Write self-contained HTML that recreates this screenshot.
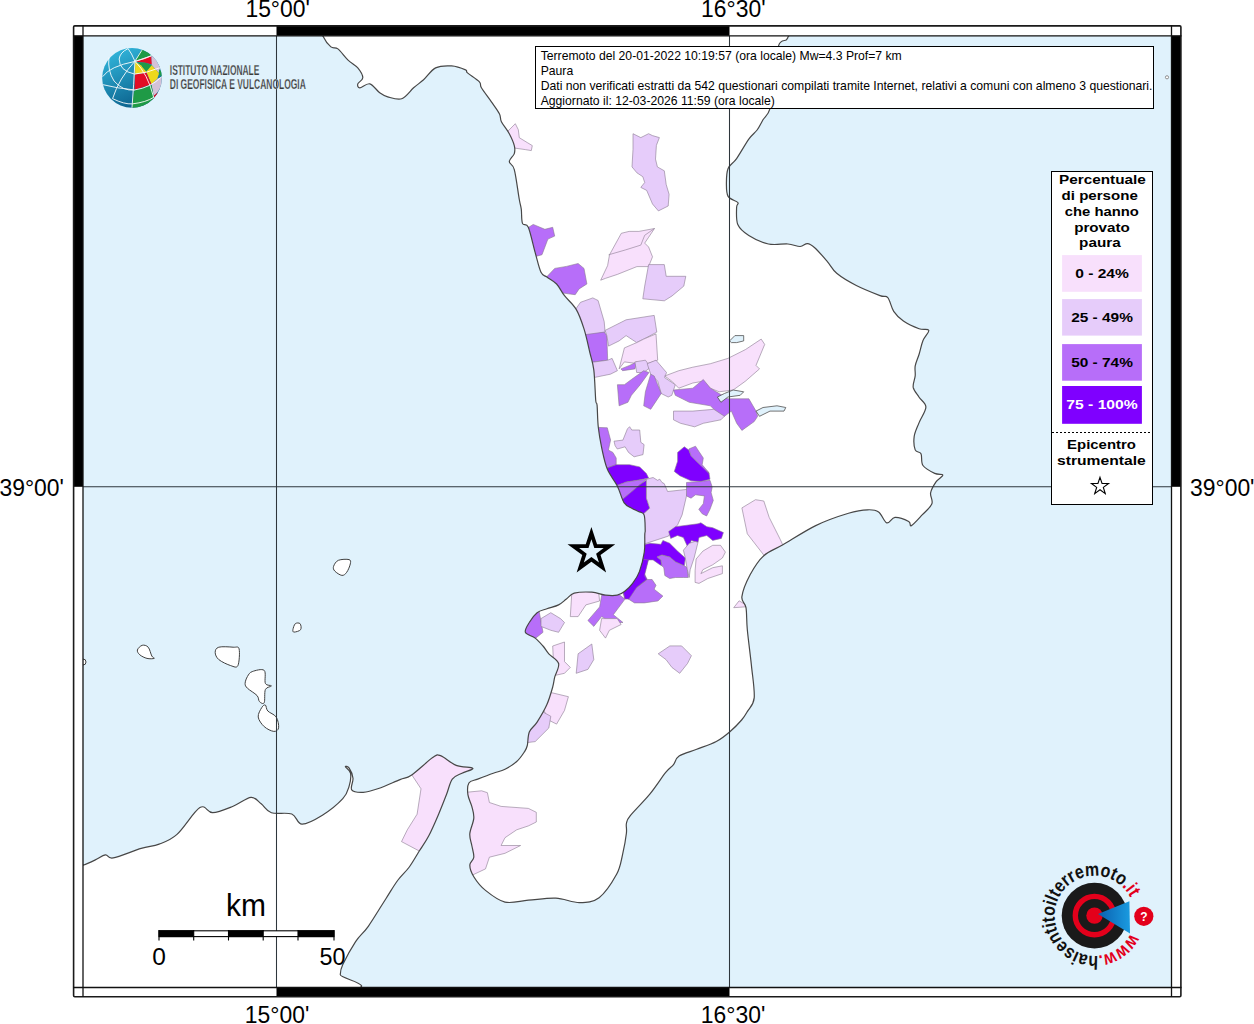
<!DOCTYPE html><html><head><meta charset="utf-8"><style>html,body{margin:0;padding:0;background:#fff;width:1254px;height:1024px;overflow:hidden}svg{display:block}text{font-family:"Liberation Sans",sans-serif}</style></head><body>
<svg width="1254" height="1024" viewBox="0 0 1254 1024">
<defs><clipPath id="mc"><rect x="83" y="36" width="1088" height="951"/></clipPath>
<linearGradient id="gb" x1="0.2" y1="0.1" x2="0.6" y2="1"><stop offset="0" stop-color="#2fb0d6"/><stop offset="1" stop-color="#0a5f8a"/></linearGradient>
<clipPath id="gc2"><circle cx="505" cy="517" r="407"/></clipPath>
<linearGradient id="tb" x1="0" y1="0" x2="1" y2="0"><stop offset="0" stop-color="#0a5fae"/><stop offset="1" stop-color="#1a9be0"/></linearGradient>
<path id="ring" d="M1130.6,933.2 A40,40 0 1,1 1130.8,898.7"/>
</defs>
<rect x="83" y="36" width="1088" height="951" fill="#E0F2FC"/>
<g clip-path="url(#mc)">
<path d="M322.9,30.0C245.2,31.0 321.6,33.2 322.9,36.0C324.2,38.8 328.4,44.8 330.9,46.9C333.4,49.0 335.1,46.7 337.9,48.9C340.7,51.1 344.5,56.7 347.8,59.9C351.1,63.1 355.3,64.9 357.8,67.9C360.3,70.9 362.8,75.2 362.8,77.8C362.8,80.4 358.3,82.1 357.8,83.8C357.3,85.5 357.8,87.8 359.8,87.8C361.8,87.8 366.5,83.0 369.8,83.8C373.1,84.6 376.7,90.6 379.7,92.8C382.7,95.0 384.0,95.8 387.7,96.8C391.4,97.8 397.4,100.3 401.7,98.8C406.0,97.3 410.0,91.0 413.6,87.8C417.2,84.6 419.9,83.1 423.6,79.8C427.3,76.5 431.0,70.2 435.6,67.9C440.2,65.6 446.5,65.6 451.5,65.9C456.5,66.2 462.8,68.7 465.5,69.9C468.2,71.1 465.2,70.9 467.5,72.9C469.8,74.9 477.1,79.3 479.4,81.8C481.7,84.3 479.4,84.5 481.4,87.8C483.4,91.1 488.4,97.5 491.4,101.8C494.4,106.1 497.7,110.4 499.4,113.7C501.1,117.0 499.8,118.4 501.4,121.7C503.0,125.0 507.2,129.7 509.3,133.7C511.4,137.7 513.5,142.3 514.3,145.6C515.1,148.9 515.1,150.9 514.3,153.6C513.5,156.3 509.3,158.9 509.3,161.6C509.3,164.3 512.6,163.3 514.3,169.6C516.0,175.9 518.1,192.9 519.3,199.5C520.5,206.1 520.8,205.4 521.3,209.4C521.8,213.4 521.3,220.4 522.5,223.4C523.7,226.4 526.2,222.4 528.3,227.3C530.4,232.2 533.1,245.2 535.2,252.7C537.3,260.2 539.0,268.2 541.0,272.3C543.0,276.4 544.3,275.2 546.9,277.1C549.5,279.1 553.7,280.9 556.6,284.0C559.5,287.1 561.2,291.5 564.5,295.7C567.8,299.9 573.0,303.9 576.2,309.4C579.5,314.9 581.7,321.8 584.0,328.9C586.3,336.0 588.2,345.5 589.8,352.3C591.4,359.1 592.8,361.9 593.8,369.9C594.8,377.8 595.2,394.1 595.7,400.0C596.2,405.9 596.7,400.8 597.1,405.4C597.5,409.9 597.5,420.2 598.3,427.3C599.1,434.4 600.2,440.9 601.7,447.9C603.2,454.9 604.7,462.8 607.3,469.1C609.9,475.4 614.5,480.3 617.3,485.9C620.1,491.5 621.6,498.9 624.0,502.6C626.4,506.3 629.4,506.7 631.8,508.2C634.2,509.7 636.5,510.4 638.5,511.5C640.5,512.6 643.0,511.8 644.1,514.9C645.2,518.0 645.1,526.7 645.2,530.0C645.3,533.3 644.9,530.8 644.8,534.5C644.6,538.2 645.2,545.9 644.3,552.1C643.4,558.3 641.3,566.4 639.4,571.6C637.5,576.8 635.0,580.1 632.6,583.4C630.2,586.7 627.4,589.2 624.8,591.2C622.2,593.2 620.4,594.5 617.2,595.2C614.0,595.9 609.7,595.7 605.5,595.2C601.3,594.7 597.0,592.5 591.8,592.2C586.6,591.9 578.4,592.1 574.2,593.2C570.0,594.4 569.0,597.2 566.4,599.1C563.8,601.0 561.9,603.3 558.6,604.9C555.4,606.5 550.5,607.5 546.9,608.8C543.3,610.1 540.0,610.4 537.1,612.7C534.2,615.0 531.2,619.2 529.3,622.5C527.3,625.8 524.4,629.7 525.4,632.3C526.4,634.9 532.3,635.8 535.2,638.1C538.1,640.4 540.7,643.4 543.0,646.0C545.3,648.6 546.2,650.9 548.8,653.8C551.4,656.7 557.6,659.6 558.6,663.5C559.6,667.4 555.7,673.3 554.7,677.2C553.7,681.1 554.0,682.5 552.7,687.0C551.4,691.5 549.5,698.6 546.9,704.5C544.3,710.4 540.0,717.5 537.1,722.1C534.2,726.7 530.9,728.0 529.3,731.9C527.7,735.8 528.1,742.2 527.3,745.5C526.5,748.8 526.3,749.0 524.5,751.7C522.7,754.4 520.0,758.6 516.7,761.5C513.5,764.4 508.9,767.3 505.0,769.3C501.1,771.2 497.9,771.6 493.3,773.2C488.8,774.8 481.8,777.5 477.7,779.1C473.6,780.7 470.5,780.4 468.9,783.0C467.3,785.6 467.4,790.8 467.9,794.7C468.4,798.6 470.8,802.5 471.8,806.4C472.8,810.3 474.1,813.5 473.8,818.1C473.5,822.7 470.1,829.2 469.8,833.8C469.5,838.4 471.1,841.6 471.8,845.5C472.5,849.4 474.1,854.0 473.8,857.2C473.5,860.5 469.8,861.8 469.8,865.0C469.8,868.2 471.2,872.5 473.8,876.7C476.4,880.9 480.3,886.2 485.5,890.4C490.7,894.6 497.9,900.5 505.0,902.1C512.1,903.7 519.9,900.9 528.4,900.2C536.9,899.6 547.3,897.8 555.8,898.2C564.3,898.6 572.3,902.7 579.5,902.6C586.7,902.5 592.9,902.4 599.1,897.7C605.3,893.0 612.7,881.4 616.6,874.3C620.5,867.1 620.9,861.6 622.5,854.8C624.1,848.0 625.8,838.5 626.4,833.3C627.0,828.1 625.8,826.4 626.4,823.5C627.0,820.6 626.4,820.6 630.3,815.7C634.2,810.8 643.9,801.4 649.8,794.2C655.7,787.0 661.6,777.6 665.5,772.7C669.4,767.8 671.0,767.7 673.3,764.9C675.6,762.1 675.2,758.7 679.1,756.1C683.0,753.5 690.5,751.7 696.7,749.3C702.9,746.9 710.8,744.4 716.3,741.5C721.8,738.6 725.7,735.3 729.9,731.7C734.1,728.1 738.7,723.4 741.6,720.0C744.5,716.6 745.2,715.3 747.3,711.6C749.4,707.9 753.5,705.6 754.2,697.9C754.9,690.1 752.5,676.5 751.4,665.1C750.2,653.7 748.2,639.1 747.3,629.5C746.4,619.9 746.9,613.2 746.0,607.7C745.1,602.2 741.2,602.2 741.9,596.7C742.6,591.2 746.5,581.6 750.1,574.8C753.8,568.0 758.3,560.7 763.8,555.7C769.3,550.7 774.2,549.8 782.9,544.8C791.5,539.8 804.8,530.9 815.7,525.6C826.6,520.4 839.8,515.9 848.5,513.3C857.2,510.7 862.7,510.0 867.7,509.8C872.7,509.6 875.4,509.8 878.6,512.0C881.8,514.2 884.1,522.0 886.8,522.9C889.5,523.8 891.4,517.6 895.0,517.4C898.6,517.2 906.0,520.1 908.7,521.5C911.4,522.9 909.1,526.7 911.4,525.6C913.7,524.5 919.0,518.3 922.4,514.7C925.8,511.1 930.5,507.5 931.9,503.8C933.3,500.1 929.9,496.5 930.6,492.8C931.3,489.1 934.0,484.9 936.0,481.9C938.0,478.9 943.1,476.4 942.9,475.0C942.7,473.6 938.0,475.0 934.7,473.4C931.4,471.8 925.3,468.8 923.0,465.5C920.7,462.2 922.3,456.4 921.0,453.8C919.7,451.2 916.3,452.8 915.2,449.9C914.1,447.0 913.6,440.9 914.2,436.3C914.9,431.8 917.2,427.5 919.1,422.6C921.0,417.7 925.9,411.2 925.9,407.0C925.9,402.8 921.2,400.5 919.1,397.2C917.0,393.9 913.9,391.0 913.2,387.4C912.6,383.8 914.9,379.3 915.2,375.7C915.5,372.1 914.6,369.5 915.2,365.9C915.9,362.3 917.8,358.4 919.1,354.2C920.4,350.0 921.4,344.5 923.0,340.5C924.6,336.5 929.4,332.3 928.8,330.4C928.1,328.4 923.3,330.4 919.1,328.8C914.9,327.2 907.6,323.9 903.4,321.0C899.2,318.1 896.3,315.2 893.7,311.3C891.1,307.4 890.1,300.2 887.8,297.6C885.5,295.0 885.2,297.6 880.0,295.6C874.8,293.6 863.5,289.2 856.3,285.5C849.1,281.8 841.6,277.4 836.7,273.3C831.8,269.2 830.7,265.4 827.0,261.1C823.3,256.8 818.0,250.6 814.7,247.7C811.4,244.8 809.8,243.8 807.4,243.6C805.0,243.4 803.4,246.4 800.1,246.5C796.9,246.6 793.2,244.4 787.9,244.0C782.6,243.6 774.9,245.4 768.4,244.0C761.9,242.6 753.9,238.8 748.8,235.5C743.7,232.2 739.8,229.2 737.8,224.5C735.8,219.8 736.6,211.1 736.6,207.4C736.6,203.7 739.2,204.3 737.8,202.5C736.4,200.7 730.0,199.7 728.1,196.4C726.2,193.2 726.4,187.7 726.4,183.0C726.4,178.3 726.4,172.5 728.1,168.4C729.8,164.3 733.2,163.5 736.6,158.6C740.0,153.7 745.4,143.9 748.8,139.1C752.2,134.3 754.7,133.2 757.1,130.0C759.5,126.8 760.9,123.3 763.0,119.8C765.1,116.3 768.0,115.7 769.8,109.1C771.6,102.5 772.5,90.6 774.0,80.0C775.5,69.4 776.5,52.3 778.6,45.6C780.7,38.9 784.8,41.4 786.4,39.8C788.0,38.2 788.0,37.6 788.4,36.0C788.8,34.4 866.6,31.0 789.0,30.0C711.4,29.0 400.6,29.0 322.9,30.0Z" fill="#fff"/>
<path d="M78.0,866.0C79.0,845.2 80.9,866.0 83.8,865.0C86.7,864.0 91.7,861.6 95.3,859.9C98.9,858.2 102.5,855.1 105.5,854.8C108.5,854.5 107.2,859.0 113.2,857.9C119.2,856.8 133.5,850.7 141.2,848.4C148.8,846.1 153.1,846.4 159.1,844.1C165.1,841.8 170.2,840.5 177.0,834.4C183.8,828.3 194.0,811.2 199.9,807.6C205.8,804.0 207.2,812.9 212.7,812.7C218.2,812.5 226.7,808.8 233.1,806.3C239.5,803.8 246.3,797.8 251.0,797.4C255.7,797.0 257.8,801.2 261.2,803.8C264.6,806.3 266.3,811.0 271.4,812.7C276.5,814.4 286.7,812.1 291.8,814.0C296.9,815.9 296.9,824.0 302.0,824.2C307.1,824.4 315.6,819.5 322.4,815.3C329.2,811.0 338.3,803.6 342.8,798.7C347.3,793.8 347.9,790.1 349.2,785.9C350.5,781.6 351.1,776.4 350.5,773.2C349.9,770.0 345.6,767.6 345.4,766.8C345.2,765.9 347.9,766.2 349.2,768.1C350.5,770.0 352.6,774.7 353.0,778.3C353.4,781.9 350.0,787.5 351.7,789.8C353.4,792.1 358.7,792.5 363.2,792.3C367.7,792.1 372.4,790.6 378.5,788.5C384.6,786.4 394.5,781.8 400.0,779.6C405.5,777.4 405.9,778.9 411.3,775.2C416.8,771.5 427.8,760.9 432.7,757.6C437.6,754.3 436.6,754.3 440.5,755.6C444.4,756.9 450.8,763.3 456.2,765.4C461.6,767.5 471.8,767.0 472.8,768.3C473.8,769.6 465.4,771.4 462.0,773.2C458.6,775.0 454.9,775.5 452.3,779.1C449.7,782.7 448.7,788.9 446.4,794.7C444.1,800.6 441.5,807.4 438.6,814.2C435.7,821.0 432.1,829.5 428.8,835.7C425.6,841.9 422.4,846.1 419.1,851.3C415.9,856.5 412.8,862.2 409.3,867.0C405.8,871.8 401.9,874.8 398.0,880.0C394.1,885.2 391.1,890.5 386.2,898.2C381.2,905.9 373.4,919.1 368.3,926.3C363.2,933.5 359.9,935.2 355.6,941.6C351.4,948.0 345.4,959.0 342.8,964.5C340.2,970.0 340.3,970.5 340.3,974.8C340.3,979.0 386.5,987.5 342.8,990.0C299.1,992.5 122.1,1010.7 78.0,990.0C33.9,969.3 77.0,886.8 78.0,866.0Z" fill="#fff"/>
<path d="M333.6,566.3C334.2,564.5 335.8,561.4 338.4,560.3C341.0,559.2 347.1,559.0 349.1,559.6C351.1,560.2 350.7,561.8 350.3,563.9C349.9,566.0 348.1,570.4 346.7,572.3C345.3,574.2 343.9,575.6 341.9,575.4C339.9,575.2 336.2,572.6 334.8,571.1C333.4,569.6 333.0,568.1 333.6,566.3Z" fill="#fff" stroke="#404040" stroke-width="1" stroke-linejoin="round"/>
<path d="M292.9,629.7C293.1,628.3 294.1,624.7 295.3,623.7C296.5,622.7 299.2,622.7 300.1,623.7C301.0,624.7 301.6,628.3 300.6,629.7C299.6,631.1 295.4,632.1 294.1,632.1C292.8,632.1 292.7,631.1 292.9,629.7Z" fill="#fff" stroke="#404040" stroke-width="1" stroke-linejoin="round"/>
<path d="M137.4,650.0C137.8,648.4 140.4,645.8 142.2,645.3C144.0,644.8 146.6,645.4 148.2,647.2C149.8,649.0 150.8,654.1 151.8,656.0C152.8,657.9 155.0,658.0 154.2,658.4C153.4,658.8 149.4,659.0 147.0,658.4C144.6,657.8 141.4,656.2 139.8,654.8C138.2,653.4 137.0,651.6 137.4,650.0Z" fill="#fff" stroke="#404040" stroke-width="1" stroke-linejoin="round"/>
<path d="M215.2,652.4C215.2,650.3 215.8,648.1 218.8,647.2C221.8,646.3 229.7,646.9 233.1,647.2C236.5,647.5 238.3,645.8 239.1,648.9C239.9,652.0 239.3,662.8 237.9,665.6C236.5,668.4 233.9,666.6 230.7,665.6C227.5,664.6 221.4,661.8 218.8,659.6C216.2,657.4 215.2,654.5 215.2,652.4Z" fill="#fff" stroke="#404040" stroke-width="1" stroke-linejoin="round"/>
<path d="M247.5,676.4C248.7,674.4 249.4,672.6 252.2,671.6C255.0,670.6 262.0,668.4 264.2,670.4C266.4,672.4 264.2,680.9 265.4,683.5C266.6,686.1 271.4,684.9 271.4,685.9C271.4,686.9 266.6,686.7 265.4,689.5C264.2,692.3 265.2,700.7 264.2,702.7C263.2,704.7 260.6,702.7 259.4,701.5C258.2,700.3 259.0,697.7 257.0,695.5C255.0,693.3 249.5,690.3 247.5,688.3C245.5,686.3 245.1,685.5 245.1,683.5C245.1,681.5 246.3,678.4 247.5,676.4Z" fill="#fff" stroke="#404040" stroke-width="1" stroke-linejoin="round"/>
<path d="M261.8,707.5C263.0,705.5 264.4,704.5 265.4,705.1C266.4,705.7 266.0,709.0 267.8,711.0C269.6,713.0 274.4,714.2 276.2,717.0C278.0,719.8 279.0,725.4 278.6,727.8C278.2,730.2 276.2,731.6 273.8,731.4C271.4,731.2 266.8,729.0 264.2,726.6C261.6,724.2 258.6,720.2 258.2,717.0C257.8,713.8 260.6,709.5 261.8,707.5Z" fill="#fff" stroke="#404040" stroke-width="1" stroke-linejoin="round"/>
<circle cx="83" cy="662" r="3" fill="#fff" stroke="#404040" stroke-width="1"/>
<circle cx="1167" cy="77.3" r="1.6" fill="#fff" stroke="#777" stroke-width="0.8"/>
<clipPath id="landclip"><path d="M322.9,30.0C245.2,31.0 321.6,33.2 322.9,36.0C324.2,38.8 328.4,44.8 330.9,46.9C333.4,49.0 335.1,46.7 337.9,48.9C340.7,51.1 344.5,56.7 347.8,59.9C351.1,63.1 355.3,64.9 357.8,67.9C360.3,70.9 362.8,75.2 362.8,77.8C362.8,80.4 358.3,82.1 357.8,83.8C357.3,85.5 357.8,87.8 359.8,87.8C361.8,87.8 366.5,83.0 369.8,83.8C373.1,84.6 376.7,90.6 379.7,92.8C382.7,95.0 384.0,95.8 387.7,96.8C391.4,97.8 397.4,100.3 401.7,98.8C406.0,97.3 410.0,91.0 413.6,87.8C417.2,84.6 419.9,83.1 423.6,79.8C427.3,76.5 431.0,70.2 435.6,67.9C440.2,65.6 446.5,65.6 451.5,65.9C456.5,66.2 462.8,68.7 465.5,69.9C468.2,71.1 465.2,70.9 467.5,72.9C469.8,74.9 477.1,79.3 479.4,81.8C481.7,84.3 479.4,84.5 481.4,87.8C483.4,91.1 488.4,97.5 491.4,101.8C494.4,106.1 497.7,110.4 499.4,113.7C501.1,117.0 499.8,118.4 501.4,121.7C503.0,125.0 507.2,129.7 509.3,133.7C511.4,137.7 513.5,142.3 514.3,145.6C515.1,148.9 515.1,150.9 514.3,153.6C513.5,156.3 509.3,158.9 509.3,161.6C509.3,164.3 512.6,163.3 514.3,169.6C516.0,175.9 518.1,192.9 519.3,199.5C520.5,206.1 520.8,205.4 521.3,209.4C521.8,213.4 521.3,220.4 522.5,223.4C523.7,226.4 526.2,222.4 528.3,227.3C530.4,232.2 533.1,245.2 535.2,252.7C537.3,260.2 539.0,268.2 541.0,272.3C543.0,276.4 544.3,275.2 546.9,277.1C549.5,279.1 553.7,280.9 556.6,284.0C559.5,287.1 561.2,291.5 564.5,295.7C567.8,299.9 573.0,303.9 576.2,309.4C579.5,314.9 581.7,321.8 584.0,328.9C586.3,336.0 588.2,345.5 589.8,352.3C591.4,359.1 592.8,361.9 593.8,369.9C594.8,377.8 595.2,394.1 595.7,400.0C596.2,405.9 596.7,400.8 597.1,405.4C597.5,409.9 597.5,420.2 598.3,427.3C599.1,434.4 600.2,440.9 601.7,447.9C603.2,454.9 604.7,462.8 607.3,469.1C609.9,475.4 614.5,480.3 617.3,485.9C620.1,491.5 621.6,498.9 624.0,502.6C626.4,506.3 629.4,506.7 631.8,508.2C634.2,509.7 636.5,510.4 638.5,511.5C640.5,512.6 643.0,511.8 644.1,514.9C645.2,518.0 645.1,526.7 645.2,530.0C645.3,533.3 644.9,530.8 644.8,534.5C644.6,538.2 645.2,545.9 644.3,552.1C643.4,558.3 641.3,566.4 639.4,571.6C637.5,576.8 635.0,580.1 632.6,583.4C630.2,586.7 627.4,589.2 624.8,591.2C622.2,593.2 620.4,594.5 617.2,595.2C614.0,595.9 609.7,595.7 605.5,595.2C601.3,594.7 597.0,592.5 591.8,592.2C586.6,591.9 578.4,592.1 574.2,593.2C570.0,594.4 569.0,597.2 566.4,599.1C563.8,601.0 561.9,603.3 558.6,604.9C555.4,606.5 550.5,607.5 546.9,608.8C543.3,610.1 540.0,610.4 537.1,612.7C534.2,615.0 531.2,619.2 529.3,622.5C527.3,625.8 524.4,629.7 525.4,632.3C526.4,634.9 532.3,635.8 535.2,638.1C538.1,640.4 540.7,643.4 543.0,646.0C545.3,648.6 546.2,650.9 548.8,653.8C551.4,656.7 557.6,659.6 558.6,663.5C559.6,667.4 555.7,673.3 554.7,677.2C553.7,681.1 554.0,682.5 552.7,687.0C551.4,691.5 549.5,698.6 546.9,704.5C544.3,710.4 540.0,717.5 537.1,722.1C534.2,726.7 530.9,728.0 529.3,731.9C527.7,735.8 528.1,742.2 527.3,745.5C526.5,748.8 526.3,749.0 524.5,751.7C522.7,754.4 520.0,758.6 516.7,761.5C513.5,764.4 508.9,767.3 505.0,769.3C501.1,771.2 497.9,771.6 493.3,773.2C488.8,774.8 481.8,777.5 477.7,779.1C473.6,780.7 470.5,780.4 468.9,783.0C467.3,785.6 467.4,790.8 467.9,794.7C468.4,798.6 470.8,802.5 471.8,806.4C472.8,810.3 474.1,813.5 473.8,818.1C473.5,822.7 470.1,829.2 469.8,833.8C469.5,838.4 471.1,841.6 471.8,845.5C472.5,849.4 474.1,854.0 473.8,857.2C473.5,860.5 469.8,861.8 469.8,865.0C469.8,868.2 471.2,872.5 473.8,876.7C476.4,880.9 480.3,886.2 485.5,890.4C490.7,894.6 497.9,900.5 505.0,902.1C512.1,903.7 519.9,900.9 528.4,900.2C536.9,899.6 547.3,897.8 555.8,898.2C564.3,898.6 572.3,902.7 579.5,902.6C586.7,902.5 592.9,902.4 599.1,897.7C605.3,893.0 612.7,881.4 616.6,874.3C620.5,867.1 620.9,861.6 622.5,854.8C624.1,848.0 625.8,838.5 626.4,833.3C627.0,828.1 625.8,826.4 626.4,823.5C627.0,820.6 626.4,820.6 630.3,815.7C634.2,810.8 643.9,801.4 649.8,794.2C655.7,787.0 661.6,777.6 665.5,772.7C669.4,767.8 671.0,767.7 673.3,764.9C675.6,762.1 675.2,758.7 679.1,756.1C683.0,753.5 690.5,751.7 696.7,749.3C702.9,746.9 710.8,744.4 716.3,741.5C721.8,738.6 725.7,735.3 729.9,731.7C734.1,728.1 738.7,723.4 741.6,720.0C744.5,716.6 745.2,715.3 747.3,711.6C749.4,707.9 753.5,705.6 754.2,697.9C754.9,690.1 752.5,676.5 751.4,665.1C750.2,653.7 748.2,639.1 747.3,629.5C746.4,619.9 746.9,613.2 746.0,607.7C745.1,602.2 741.2,602.2 741.9,596.7C742.6,591.2 746.5,581.6 750.1,574.8C753.8,568.0 758.3,560.7 763.8,555.7C769.3,550.7 774.2,549.8 782.9,544.8C791.5,539.8 804.8,530.9 815.7,525.6C826.6,520.4 839.8,515.9 848.5,513.3C857.2,510.7 862.7,510.0 867.7,509.8C872.7,509.6 875.4,509.8 878.6,512.0C881.8,514.2 884.1,522.0 886.8,522.9C889.5,523.8 891.4,517.6 895.0,517.4C898.6,517.2 906.0,520.1 908.7,521.5C911.4,522.9 909.1,526.7 911.4,525.6C913.7,524.5 919.0,518.3 922.4,514.7C925.8,511.1 930.5,507.5 931.9,503.8C933.3,500.1 929.9,496.5 930.6,492.8C931.3,489.1 934.0,484.9 936.0,481.9C938.0,478.9 943.1,476.4 942.9,475.0C942.7,473.6 938.0,475.0 934.7,473.4C931.4,471.8 925.3,468.8 923.0,465.5C920.7,462.2 922.3,456.4 921.0,453.8C919.7,451.2 916.3,452.8 915.2,449.9C914.1,447.0 913.6,440.9 914.2,436.3C914.9,431.8 917.2,427.5 919.1,422.6C921.0,417.7 925.9,411.2 925.9,407.0C925.9,402.8 921.2,400.5 919.1,397.2C917.0,393.9 913.9,391.0 913.2,387.4C912.6,383.8 914.9,379.3 915.2,375.7C915.5,372.1 914.6,369.5 915.2,365.9C915.9,362.3 917.8,358.4 919.1,354.2C920.4,350.0 921.4,344.5 923.0,340.5C924.6,336.5 929.4,332.3 928.8,330.4C928.1,328.4 923.3,330.4 919.1,328.8C914.9,327.2 907.6,323.9 903.4,321.0C899.2,318.1 896.3,315.2 893.7,311.3C891.1,307.4 890.1,300.2 887.8,297.6C885.5,295.0 885.2,297.6 880.0,295.6C874.8,293.6 863.5,289.2 856.3,285.5C849.1,281.8 841.6,277.4 836.7,273.3C831.8,269.2 830.7,265.4 827.0,261.1C823.3,256.8 818.0,250.6 814.7,247.7C811.4,244.8 809.8,243.8 807.4,243.6C805.0,243.4 803.4,246.4 800.1,246.5C796.9,246.6 793.2,244.4 787.9,244.0C782.6,243.6 774.9,245.4 768.4,244.0C761.9,242.6 753.9,238.8 748.8,235.5C743.7,232.2 739.8,229.2 737.8,224.5C735.8,219.8 736.6,211.1 736.6,207.4C736.6,203.7 739.2,204.3 737.8,202.5C736.4,200.7 730.0,199.7 728.1,196.4C726.2,193.2 726.4,187.7 726.4,183.0C726.4,178.3 726.4,172.5 728.1,168.4C729.8,164.3 733.2,163.5 736.6,158.6C740.0,153.7 745.4,143.9 748.8,139.1C752.2,134.3 754.7,133.2 757.1,130.0C759.5,126.8 760.9,123.3 763.0,119.8C765.1,116.3 768.0,115.7 769.8,109.1C771.6,102.5 772.5,90.6 774.0,80.0C775.5,69.4 776.5,52.3 778.6,45.6C780.7,38.9 784.8,41.4 786.4,39.8C788.0,38.2 788.0,37.6 788.4,36.0C788.8,34.4 866.6,31.0 789.0,30.0C711.4,29.0 400.6,29.0 322.9,30.0Z"/><path d="M78.0,866.0C79.0,845.2 80.9,866.0 83.8,865.0C86.7,864.0 91.7,861.6 95.3,859.9C98.9,858.2 102.5,855.1 105.5,854.8C108.5,854.5 107.2,859.0 113.2,857.9C119.2,856.8 133.5,850.7 141.2,848.4C148.8,846.1 153.1,846.4 159.1,844.1C165.1,841.8 170.2,840.5 177.0,834.4C183.8,828.3 194.0,811.2 199.9,807.6C205.8,804.0 207.2,812.9 212.7,812.7C218.2,812.5 226.7,808.8 233.1,806.3C239.5,803.8 246.3,797.8 251.0,797.4C255.7,797.0 257.8,801.2 261.2,803.8C264.6,806.3 266.3,811.0 271.4,812.7C276.5,814.4 286.7,812.1 291.8,814.0C296.9,815.9 296.9,824.0 302.0,824.2C307.1,824.4 315.6,819.5 322.4,815.3C329.2,811.0 338.3,803.6 342.8,798.7C347.3,793.8 347.9,790.1 349.2,785.9C350.5,781.6 351.1,776.4 350.5,773.2C349.9,770.0 345.6,767.6 345.4,766.8C345.2,765.9 347.9,766.2 349.2,768.1C350.5,770.0 352.6,774.7 353.0,778.3C353.4,781.9 350.0,787.5 351.7,789.8C353.4,792.1 358.7,792.5 363.2,792.3C367.7,792.1 372.4,790.6 378.5,788.5C384.6,786.4 394.5,781.8 400.0,779.6C405.5,777.4 405.9,778.9 411.3,775.2C416.8,771.5 427.8,760.9 432.7,757.6C437.6,754.3 436.6,754.3 440.5,755.6C444.4,756.9 450.8,763.3 456.2,765.4C461.6,767.5 471.8,767.0 472.8,768.3C473.8,769.6 465.4,771.4 462.0,773.2C458.6,775.0 454.9,775.5 452.3,779.1C449.7,782.7 448.7,788.9 446.4,794.7C444.1,800.6 441.5,807.4 438.6,814.2C435.7,821.0 432.1,829.5 428.8,835.7C425.6,841.9 422.4,846.1 419.1,851.3C415.9,856.5 412.8,862.2 409.3,867.0C405.8,871.8 401.9,874.8 398.0,880.0C394.1,885.2 391.1,890.5 386.2,898.2C381.2,905.9 373.4,919.1 368.3,926.3C363.2,933.5 359.9,935.2 355.6,941.6C351.4,948.0 345.4,959.0 342.8,964.5C340.2,970.0 340.3,970.5 340.3,974.8C340.3,979.0 386.5,987.5 342.8,990.0C299.1,992.5 122.1,1010.7 78.0,990.0C33.9,969.3 77.0,886.8 78.0,866.0Z"/></clipPath>
<g clip-path="url(#landclip)">
<polygon points="505.6,133.5 515.3,123.7 518.3,129.7 519.3,137.7 527.3,142.6 532.3,145.6 531.3,150.6 525.3,149.6 511.3,147.6 511.4,146.4 506.5,134.8" fill="#F8E0FC" stroke="#8a7a90" stroke-width="0.6" stroke-linejoin="round"/>
<polygon points="633.0,133.7 640.8,137.6 648.6,133.7 652.5,135.6 659.4,137.6 656.4,145.4 655.5,159.1 657.4,166.9 664.3,170.8 666.2,184.5 669.1,194.3 668.2,206.0 658.4,210.9 652.5,204.0 646.7,190.4 640.8,187.4 644.7,182.5 642.8,176.7 636.9,172.8 632.0,166.9 633.0,149.3" fill="#E6CCFA" stroke="#8a7a90" stroke-width="0.6" stroke-linejoin="round"/>
<polygon points="525.7,229.2 533.2,224.4 544.9,229.3 552.7,227.3 554.7,236.1 547.9,239.1 542.0,254.7 533.4,257.1 532.4,253.8 525.7,229.3" fill="#B76EF9" stroke="#8a7a90" stroke-width="0.6" stroke-linejoin="round"/>
<polygon points="544.6,279.1 554.7,268.4 566.4,266.4 578.1,263.5 584.0,268.4 586.9,284.0 579.1,288.9 575.2,294.7 568.4,293.8 558.7,292.4 554.5,286.1" fill="#B76EF9" stroke="#8a7a90" stroke-width="0.6" stroke-linejoin="round"/>
<polygon points="600.7,280.2 607.6,265.6 609.5,254.8 621.3,233.3 629.1,231.4 638.9,231.4 654.5,228.5 648.6,237.3 644.7,243.1 648.6,247.0 652.5,256.8 648.6,266.6 636.9,266.6 617.4,274.4 605.6,278.3" fill="#F8E0FC" stroke="#8a7a90" stroke-width="0.6" stroke-linejoin="round"/>
<polygon points="648.6,264.6 664.3,264.6 666.2,276.3 685.8,276.3 683.8,286.1 672.1,295.9 664.3,300.8 642.8,298.8 644.7,286.1" fill="#E6CCFA" stroke="#8a7a90" stroke-width="0.6" stroke-linejoin="round"/>
<polygon points="580.5,302.3 592.8,297.9 598.1,300.5 604.2,321.6 605.1,332.1 582.9,336.8 581.2,330.0 573.9,311.7" fill="#E6CCFA" stroke="#8a7a90" stroke-width="0.6" stroke-linejoin="round"/>
<polygon points="582.4,335.0 604.2,332.1 606.8,335.6 607.7,360.2 589.1,362.7 587.0,353.4" fill="#B76EF9" stroke="#8a7a90" stroke-width="0.6" stroke-linejoin="round"/>
<polygon points="589.1,362.7 607.7,360.2 612.1,358.4 617.4,370.7 610.4,374.2 591.3,378.1 590.7,369.8" fill="#E6CCFA" stroke="#8a7a90" stroke-width="0.6" stroke-linejoin="round"/>
<polygon points="605.1,330.4 626.1,319.8 654.2,315.4 656.8,332.1 643.7,339.1 636.7,342.6 626.1,335.6 619.1,340.9 608.6,346.1 606.8,335.6" fill="#E6CCFA" stroke="#8a7a90" stroke-width="0.6" stroke-linejoin="round"/>
<polygon points="624.4,347.9 636.7,342.6 643.7,339.1 656.0,333.9 657.7,360.2 647.2,363.7 638.4,363.7 624.4,361.9 619.1,368.9" fill="#F8E0FC" stroke="#8a7a90" stroke-width="0.6" stroke-linejoin="round"/>
<polygon points="620.9,368.9 629.6,365.4 636.7,361.9 634.9,368.9 622.6,370.7" fill="#B76EF9" stroke="#8a7a90" stroke-width="0.6" stroke-linejoin="round"/>
<polygon points="634.9,361.9 645.4,360.2 650.7,367.2 643.7,372.5 636.7,372.5" fill="#E6CCFA" stroke="#8a7a90" stroke-width="0.6" stroke-linejoin="round"/>
<polygon points="647.2,363.7 656.0,360.2 666.5,372.5 664.7,377.7 675.3,384.7 671.8,395.3 668.2,397.0 661.2,393.5 657.7,381.2 650.7,374.2" fill="#E6CCFA" stroke="#8a7a90" stroke-width="0.6" stroke-linejoin="round"/>
<polygon points="617.4,384.7 624.4,384.7 631.4,379.5 643.7,370.7 649.0,372.5 640.2,384.7 631.4,395.3 627.9,402.3 619.1,405.8" fill="#B76EF9" stroke="#8a7a90" stroke-width="0.6" stroke-linejoin="round"/>
<polygon points="650.7,374.2 654.2,376.0 657.7,384.7 661.2,393.5 650.7,409.3 643.7,405.8 645.4,391.8" fill="#B76EF9" stroke="#8a7a90" stroke-width="0.6" stroke-linejoin="round"/>
<polygon points="664.7,376.0 678.8,370.7 692.8,367.2 710.4,363.7 727.9,358.4 745.4,349.6 761.2,339.1 764.7,344.4 756.0,365.4 759.5,368.9 745.4,381.2 733.2,390.0 719.1,391.8 710.4,388.2 703.3,381.2 692.8,383.0 678.8,388.2 671.8,381.2" fill="#F8E0FC" stroke="#8a7a90" stroke-width="0.6" stroke-linejoin="round"/>
<polygon points="673.5,390.0 692.8,388.2 703.3,379.5 710.4,388.2 719.1,393.5 727.9,398.8 748.9,398.8 756.0,411.1 757.7,416.3 754.2,421.6 741.9,430.4 736.7,423.3 731.4,411.1 724.4,416.3 717.4,412.8 710.4,405.8 689.3,402.3 675.3,395.3" fill="#B76EF9" stroke="#8a7a90" stroke-width="0.6" stroke-linejoin="round"/>
<polygon points="673.5,411.1 692.8,411.1 713.9,409.3 724.4,416.3 720.9,419.8 703.3,423.3 694.6,426.8 680.5,423.3 673.5,419.8" fill="#E6CCFA" stroke="#8a7a90" stroke-width="0.6" stroke-linejoin="round"/>
<polygon points="595.3,427.3 607.3,427.8 610.6,440.1 608.4,450.1 612.9,452.4 616.2,458.0 616.2,464.7 604.2,469.0 598.9,449.0" fill="#B76EF9" stroke="#8a7a90" stroke-width="0.6" stroke-linejoin="round"/>
<polygon points="614.0,441.2 622.9,440.1 627.4,428.9 629.6,426.7 631.8,430.0 639.7,430.0 640.8,442.3 644.1,444.6 643.0,454.6 634.1,456.8 628.5,452.4 625.1,446.8 617.3,449.0 615.1,445.7" fill="#E6CCFA" stroke="#8a7a90" stroke-width="0.6" stroke-linejoin="round"/>
<polygon points="604.5,470.2 604.2,469.0 616.2,464.7 629.6,464.7 639.7,466.9 646.4,473.6 648.6,478.1 637.4,480.3 626.3,482.0 614.2,486.6" fill="#7F00FF" stroke="#8a7a90" stroke-width="0.6" stroke-linejoin="round"/>
<polygon points="614.2,486.6 626.3,482.0 637.4,480.3 646.4,479.2 639.7,484.8 630.7,492.6 620.2,501.3 617.7,494.9" fill="#B76EF9" stroke="#8a7a90" stroke-width="0.6" stroke-linejoin="round"/>
<polygon points="620.2,501.3 630.7,492.6 639.7,484.8 646.4,480.3 646.4,498.2 649.7,508.2 641.3,516.0 637.4,514.3 630.7,511.0 621.9,504.7" fill="#7F00FF" stroke="#8a7a90" stroke-width="0.6" stroke-linejoin="round"/>
<polygon points="646.4,479.2 653.1,477.5 657.5,480.3 659.8,479.2 662.0,482.5 664.2,483.6 667.6,491.5 688.8,489.2 686.5,495.9 682.1,514.9 677.6,524.9 670.0,533.0 668.7,536.0 641.5,544.9 641.8,534.5 642.2,530.0 641.3,516.0 649.7,508.2 646.4,498.2" fill="#E6CCFA" stroke="#8a7a90" stroke-width="0.6" stroke-linejoin="round"/>
<polygon points="684.3,446.8 688.8,450.1 691.0,455.7 697.7,462.4 708.9,472.5 710.0,479.2 701.1,481.4 691.0,480.8 679.9,475.8 674.3,471.4 677.6,461.3 677.6,452.4" fill="#7F00FF" stroke="#8a7a90" stroke-width="0.6" stroke-linejoin="round"/>
<polygon points="688.8,449.0 695.5,446.2 698.8,451.3 703.3,458.0 702.2,464.7 707.8,471.4 708.9,473.6 697.7,462.4 691.0,455.7" fill="#B76EF9" stroke="#8a7a90" stroke-width="0.6" stroke-linejoin="round"/>
<polygon points="686.5,482.5 701.1,481.4 710.0,480.3 712.2,487.0 711.1,492.6 713.3,500.4 710.0,509.3 706.6,516.0 702.2,513.8 698.8,509.3 703.3,503.7 704.4,495.9 695.5,494.8 691.0,498.2 686.5,495.9" fill="#B76EF9" stroke="#8a7a90" stroke-width="0.6" stroke-linejoin="round"/>
<polygon points="741.9,507.9 755.5,499.7 763.8,501.0 769.2,517.4 780.2,539.3 784.0,547.6 765.9,557.8 747.3,533.8" fill="#F8E0FC" stroke="#8a7a90" stroke-width="0.6" stroke-linejoin="round"/>
<polygon points="733.7,607.7 739.1,600.8 748.8,606.6" fill="#F8E0FC" stroke="#8a7a90" stroke-width="0.6" stroke-linejoin="round"/>
<polygon points="668.7,531.6 675.5,526.7 698.0,523.8 700.9,522.8 706.8,526.7 712.7,527.7 723.4,532.6 721.4,538.4 712.7,540.4 706.8,535.5 699.0,537.5 698.0,542.3 691.2,540.4 689.2,548.2 687.3,546.2 683.4,537.5 677.5,535.5 670.7,538.4" fill="#7F00FF" stroke="#8a7a90" stroke-width="0.6" stroke-linejoin="round"/>
<polygon points="641.5,545.9 641.5,545.2 650.2,543.3 660.9,544.3 662.9,540.4 669.7,543.3 677.5,551.1 685.3,558.0 684.3,565.8 675.5,561.9 669.7,557.0 661.9,555.0 657.0,557.0 660.9,559.9 661.9,565.8 659.9,564.8 653.1,559.9 648.2,559.9 644.3,573.6 647.2,579.5 634.5,589.2 624.8,599.0 622.2,589.2 630.5,581.3 636.6,570.5 641.3,552.1" fill="#7F00FF" stroke="#8a7a90" stroke-width="0.6" stroke-linejoin="round"/>
<polygon points="657.0,557.0 661.9,555.0 669.7,557.0 675.5,561.9 684.3,565.8 687.3,567.7 688.2,577.5 683.4,577.5 675.5,577.5 669.7,578.5 664.8,575.5 663.8,567.7 661.9,565.8 660.9,559.9" fill="#B76EF9" stroke="#8a7a90" stroke-width="0.6" stroke-linejoin="round"/>
<polygon points="626.7,598.0 634.5,589.2 647.2,579.5 652.1,579.5 656.0,585.3 654.1,589.2 662.9,596.1 658.0,600.9 644.3,602.9 634.5,602.9" fill="#B76EF9" stroke="#8a7a90" stroke-width="0.6" stroke-linejoin="round"/>
<polygon points="683.4,550.2 689.2,543.3 695.1,541.4 698.0,542.3 694.1,558.0 690.2,569.7 689.2,577.5 687.3,569.7 685.3,558.0" fill="#E6CCFA" stroke="#8a7a90" stroke-width="0.6" stroke-linejoin="round"/>
<polygon points="696.1,559.0 702.9,551.1 712.7,545.3 720.5,545.3 725.4,552.1 722.4,558.0 712.7,564.8 702.9,569.7 700.9,573.6 712.7,567.7 722.4,565.8 722.4,573.6 707.8,578.5 699.0,583.4 695.1,582.4 695.1,570.7" fill="#F8E0FC" stroke="#8a7a90" stroke-width="0.6" stroke-linejoin="round"/>
<polygon points="639.5,558.8 648.4,560.0 644.5,575.6 646.5,579.5 636.7,587.3 628.9,599.1 625.0,599.1 622.7,588.9 629.6,582.2 636.2,571.2" fill="#7F00FF" stroke="#8a7a90" stroke-width="0.6" stroke-linejoin="round"/>
<polygon points="602.4,591.5 616.1,592.4 625.0,599.1 613.3,614.7 623.0,622.5 611.3,622.5 601.6,616.6 593.8,626.4 587.9,620.5 599.6,606.9" fill="#B76EF9" stroke="#8a7a90" stroke-width="0.6" stroke-linejoin="round"/>
<polygon points="571.9,591.2 598.5,590.6 599.6,601.0 585.9,604.9 578.1,616.6 570.3,616.6" fill="#F8E0FC" stroke="#8a7a90" stroke-width="0.6" stroke-linejoin="round"/>
<polygon points="601.6,618.6 617.2,618.6 621.1,624.5 609.4,630.3 605.5,638.1 599.6,630.3" fill="#F8E0FC" stroke="#8a7a90" stroke-width="0.6" stroke-linejoin="round"/>
<polygon points="524.2,627.2 531.6,614.9 538.7,608.8 543.0,632.3 533.1,640.2 522.6,633.4" fill="#B76EF9" stroke="#8a7a90" stroke-width="0.6" stroke-linejoin="round"/>
<polygon points="541.0,618.6 550.8,612.7 560.5,618.6 564.5,622.5 558.6,632.3 550.8,630.3 541.0,626.4" fill="#E6CCFA" stroke="#8a7a90" stroke-width="0.6" stroke-linejoin="round"/>
<polygon points="552.7,646.0 564.5,642.0 564.5,661.6 570.3,667.4 564.5,673.3 551.9,676.1 553.5,662.7" fill="#F8E0FC" stroke="#8a7a90" stroke-width="0.6" stroke-linejoin="round"/>
<polygon points="578.1,653.8 591.8,644.0 593.8,659.6 587.9,669.4 576.2,673.3" fill="#E6CCFA" stroke="#8a7a90" stroke-width="0.6" stroke-linejoin="round"/>
<polygon points="658.2,653.8 669.9,645.9 681.6,645.9 691.4,655.7 687.5,663.5 679.7,673.3 671.9,667.4 666.0,659.6" fill="#E6CCFA" stroke="#8a7a90" stroke-width="0.6" stroke-linejoin="round"/>
<polygon points="547.9,691.8 568.4,696.7 564.5,710.4 556.6,724.1 548.8,720.2 542.1,706.9" fill="#F8E0FC" stroke="#8a7a90" stroke-width="0.6" stroke-linejoin="round"/>
<polygon points="526.5,730.8 540.2,710.4 550.8,716.3 548.8,728.0 535.2,741.6 524.6,742.9" fill="#E6CCFA" stroke="#8a7a90" stroke-width="0.6" stroke-linejoin="round"/>
<polygon points="410.2,772.4 431.6,754.8 441.6,752.8 457.3,762.6 475.6,769.4 463.1,776.0 454.4,781.2 449.2,795.8 441.4,815.3 431.6,836.8 421.9,852.4 401.5,841.6 407.3,829.8 417.1,814.2 421.0,788.8" fill="#F8E0FC" stroke="#8a7a90" stroke-width="0.6" stroke-linejoin="round"/>
<polygon points="465.1,792.4 481.6,790.8 487.4,792.7 489.4,802.5 501.1,806.4 528.4,808.4 536.3,812.3 536.3,822.0 528.4,825.9 516.7,829.8 505.0,837.7 501.1,845.5 520.6,845.5 505.0,853.3 489.4,857.2 485.5,868.9 470.4,876.0 467.0,863.9 470.8,857.2 468.8,845.5 466.8,833.8 470.8,818.1 469.0,807.5" fill="#F8E0FC" stroke="#8a7a90" stroke-width="0.6" stroke-linejoin="round"/>
</g>
<path d="M322.9,30.0C245.2,31.0 321.6,33.2 322.9,36.0C324.2,38.8 328.4,44.8 330.9,46.9C333.4,49.0 335.1,46.7 337.9,48.9C340.7,51.1 344.5,56.7 347.8,59.9C351.1,63.1 355.3,64.9 357.8,67.9C360.3,70.9 362.8,75.2 362.8,77.8C362.8,80.4 358.3,82.1 357.8,83.8C357.3,85.5 357.8,87.8 359.8,87.8C361.8,87.8 366.5,83.0 369.8,83.8C373.1,84.6 376.7,90.6 379.7,92.8C382.7,95.0 384.0,95.8 387.7,96.8C391.4,97.8 397.4,100.3 401.7,98.8C406.0,97.3 410.0,91.0 413.6,87.8C417.2,84.6 419.9,83.1 423.6,79.8C427.3,76.5 431.0,70.2 435.6,67.9C440.2,65.6 446.5,65.6 451.5,65.9C456.5,66.2 462.8,68.7 465.5,69.9C468.2,71.1 465.2,70.9 467.5,72.9C469.8,74.9 477.1,79.3 479.4,81.8C481.7,84.3 479.4,84.5 481.4,87.8C483.4,91.1 488.4,97.5 491.4,101.8C494.4,106.1 497.7,110.4 499.4,113.7C501.1,117.0 499.8,118.4 501.4,121.7C503.0,125.0 507.2,129.7 509.3,133.7C511.4,137.7 513.5,142.3 514.3,145.6C515.1,148.9 515.1,150.9 514.3,153.6C513.5,156.3 509.3,158.9 509.3,161.6C509.3,164.3 512.6,163.3 514.3,169.6C516.0,175.9 518.1,192.9 519.3,199.5C520.5,206.1 520.8,205.4 521.3,209.4C521.8,213.4 521.3,220.4 522.5,223.4C523.7,226.4 526.2,222.4 528.3,227.3C530.4,232.2 533.1,245.2 535.2,252.7C537.3,260.2 539.0,268.2 541.0,272.3C543.0,276.4 544.3,275.2 546.9,277.1C549.5,279.1 553.7,280.9 556.6,284.0C559.5,287.1 561.2,291.5 564.5,295.7C567.8,299.9 573.0,303.9 576.2,309.4C579.5,314.9 581.7,321.8 584.0,328.9C586.3,336.0 588.2,345.5 589.8,352.3C591.4,359.1 592.8,361.9 593.8,369.9C594.8,377.8 595.2,394.1 595.7,400.0C596.2,405.9 596.7,400.8 597.1,405.4C597.5,409.9 597.5,420.2 598.3,427.3C599.1,434.4 600.2,440.9 601.7,447.9C603.2,454.9 604.7,462.8 607.3,469.1C609.9,475.4 614.5,480.3 617.3,485.9C620.1,491.5 621.6,498.9 624.0,502.6C626.4,506.3 629.4,506.7 631.8,508.2C634.2,509.7 636.5,510.4 638.5,511.5C640.5,512.6 643.0,511.8 644.1,514.9C645.2,518.0 645.1,526.7 645.2,530.0C645.3,533.3 644.9,530.8 644.8,534.5C644.6,538.2 645.2,545.9 644.3,552.1C643.4,558.3 641.3,566.4 639.4,571.6C637.5,576.8 635.0,580.1 632.6,583.4C630.2,586.7 627.4,589.2 624.8,591.2C622.2,593.2 620.4,594.5 617.2,595.2C614.0,595.9 609.7,595.7 605.5,595.2C601.3,594.7 597.0,592.5 591.8,592.2C586.6,591.9 578.4,592.1 574.2,593.2C570.0,594.4 569.0,597.2 566.4,599.1C563.8,601.0 561.9,603.3 558.6,604.9C555.4,606.5 550.5,607.5 546.9,608.8C543.3,610.1 540.0,610.4 537.1,612.7C534.2,615.0 531.2,619.2 529.3,622.5C527.3,625.8 524.4,629.7 525.4,632.3C526.4,634.9 532.3,635.8 535.2,638.1C538.1,640.4 540.7,643.4 543.0,646.0C545.3,648.6 546.2,650.9 548.8,653.8C551.4,656.7 557.6,659.6 558.6,663.5C559.6,667.4 555.7,673.3 554.7,677.2C553.7,681.1 554.0,682.5 552.7,687.0C551.4,691.5 549.5,698.6 546.9,704.5C544.3,710.4 540.0,717.5 537.1,722.1C534.2,726.7 530.9,728.0 529.3,731.9C527.7,735.8 528.1,742.2 527.3,745.5C526.5,748.8 526.3,749.0 524.5,751.7C522.7,754.4 520.0,758.6 516.7,761.5C513.5,764.4 508.9,767.3 505.0,769.3C501.1,771.2 497.9,771.6 493.3,773.2C488.8,774.8 481.8,777.5 477.7,779.1C473.6,780.7 470.5,780.4 468.9,783.0C467.3,785.6 467.4,790.8 467.9,794.7C468.4,798.6 470.8,802.5 471.8,806.4C472.8,810.3 474.1,813.5 473.8,818.1C473.5,822.7 470.1,829.2 469.8,833.8C469.5,838.4 471.1,841.6 471.8,845.5C472.5,849.4 474.1,854.0 473.8,857.2C473.5,860.5 469.8,861.8 469.8,865.0C469.8,868.2 471.2,872.5 473.8,876.7C476.4,880.9 480.3,886.2 485.5,890.4C490.7,894.6 497.9,900.5 505.0,902.1C512.1,903.7 519.9,900.9 528.4,900.2C536.9,899.6 547.3,897.8 555.8,898.2C564.3,898.6 572.3,902.7 579.5,902.6C586.7,902.5 592.9,902.4 599.1,897.7C605.3,893.0 612.7,881.4 616.6,874.3C620.5,867.1 620.9,861.6 622.5,854.8C624.1,848.0 625.8,838.5 626.4,833.3C627.0,828.1 625.8,826.4 626.4,823.5C627.0,820.6 626.4,820.6 630.3,815.7C634.2,810.8 643.9,801.4 649.8,794.2C655.7,787.0 661.6,777.6 665.5,772.7C669.4,767.8 671.0,767.7 673.3,764.9C675.6,762.1 675.2,758.7 679.1,756.1C683.0,753.5 690.5,751.7 696.7,749.3C702.9,746.9 710.8,744.4 716.3,741.5C721.8,738.6 725.7,735.3 729.9,731.7C734.1,728.1 738.7,723.4 741.6,720.0C744.5,716.6 745.2,715.3 747.3,711.6C749.4,707.9 753.5,705.6 754.2,697.9C754.9,690.1 752.5,676.5 751.4,665.1C750.2,653.7 748.2,639.1 747.3,629.5C746.4,619.9 746.9,613.2 746.0,607.7C745.1,602.2 741.2,602.2 741.9,596.7C742.6,591.2 746.5,581.6 750.1,574.8C753.8,568.0 758.3,560.7 763.8,555.7C769.3,550.7 774.2,549.8 782.9,544.8C791.5,539.8 804.8,530.9 815.7,525.6C826.6,520.4 839.8,515.9 848.5,513.3C857.2,510.7 862.7,510.0 867.7,509.8C872.7,509.6 875.4,509.8 878.6,512.0C881.8,514.2 884.1,522.0 886.8,522.9C889.5,523.8 891.4,517.6 895.0,517.4C898.6,517.2 906.0,520.1 908.7,521.5C911.4,522.9 909.1,526.7 911.4,525.6C913.7,524.5 919.0,518.3 922.4,514.7C925.8,511.1 930.5,507.5 931.9,503.8C933.3,500.1 929.9,496.5 930.6,492.8C931.3,489.1 934.0,484.9 936.0,481.9C938.0,478.9 943.1,476.4 942.9,475.0C942.7,473.6 938.0,475.0 934.7,473.4C931.4,471.8 925.3,468.8 923.0,465.5C920.7,462.2 922.3,456.4 921.0,453.8C919.7,451.2 916.3,452.8 915.2,449.9C914.1,447.0 913.6,440.9 914.2,436.3C914.9,431.8 917.2,427.5 919.1,422.6C921.0,417.7 925.9,411.2 925.9,407.0C925.9,402.8 921.2,400.5 919.1,397.2C917.0,393.9 913.9,391.0 913.2,387.4C912.6,383.8 914.9,379.3 915.2,375.7C915.5,372.1 914.6,369.5 915.2,365.9C915.9,362.3 917.8,358.4 919.1,354.2C920.4,350.0 921.4,344.5 923.0,340.5C924.6,336.5 929.4,332.3 928.8,330.4C928.1,328.4 923.3,330.4 919.1,328.8C914.9,327.2 907.6,323.9 903.4,321.0C899.2,318.1 896.3,315.2 893.7,311.3C891.1,307.4 890.1,300.2 887.8,297.6C885.5,295.0 885.2,297.6 880.0,295.6C874.8,293.6 863.5,289.2 856.3,285.5C849.1,281.8 841.6,277.4 836.7,273.3C831.8,269.2 830.7,265.4 827.0,261.1C823.3,256.8 818.0,250.6 814.7,247.7C811.4,244.8 809.8,243.8 807.4,243.6C805.0,243.4 803.4,246.4 800.1,246.5C796.9,246.6 793.2,244.4 787.9,244.0C782.6,243.6 774.9,245.4 768.4,244.0C761.9,242.6 753.9,238.8 748.8,235.5C743.7,232.2 739.8,229.2 737.8,224.5C735.8,219.8 736.6,211.1 736.6,207.4C736.6,203.7 739.2,204.3 737.8,202.5C736.4,200.7 730.0,199.7 728.1,196.4C726.2,193.2 726.4,187.7 726.4,183.0C726.4,178.3 726.4,172.5 728.1,168.4C729.8,164.3 733.2,163.5 736.6,158.6C740.0,153.7 745.4,143.9 748.8,139.1C752.2,134.3 754.7,133.2 757.1,130.0C759.5,126.8 760.9,123.3 763.0,119.8C765.1,116.3 768.0,115.7 769.8,109.1C771.6,102.5 772.5,90.6 774.0,80.0C775.5,69.4 776.5,52.3 778.6,45.6C780.7,38.9 784.8,41.4 786.4,39.8C788.0,38.2 788.0,37.6 788.4,36.0C788.8,34.4 866.6,31.0 789.0,30.0C711.4,29.0 400.6,29.0 322.9,30.0Z" fill="none" stroke="#474747" stroke-width="1.2" stroke-linejoin="round"/>
<path d="M78.0,866.0C79.0,845.2 80.9,866.0 83.8,865.0C86.7,864.0 91.7,861.6 95.3,859.9C98.9,858.2 102.5,855.1 105.5,854.8C108.5,854.5 107.2,859.0 113.2,857.9C119.2,856.8 133.5,850.7 141.2,848.4C148.8,846.1 153.1,846.4 159.1,844.1C165.1,841.8 170.2,840.5 177.0,834.4C183.8,828.3 194.0,811.2 199.9,807.6C205.8,804.0 207.2,812.9 212.7,812.7C218.2,812.5 226.7,808.8 233.1,806.3C239.5,803.8 246.3,797.8 251.0,797.4C255.7,797.0 257.8,801.2 261.2,803.8C264.6,806.3 266.3,811.0 271.4,812.7C276.5,814.4 286.7,812.1 291.8,814.0C296.9,815.9 296.9,824.0 302.0,824.2C307.1,824.4 315.6,819.5 322.4,815.3C329.2,811.0 338.3,803.6 342.8,798.7C347.3,793.8 347.9,790.1 349.2,785.9C350.5,781.6 351.1,776.4 350.5,773.2C349.9,770.0 345.6,767.6 345.4,766.8C345.2,765.9 347.9,766.2 349.2,768.1C350.5,770.0 352.6,774.7 353.0,778.3C353.4,781.9 350.0,787.5 351.7,789.8C353.4,792.1 358.7,792.5 363.2,792.3C367.7,792.1 372.4,790.6 378.5,788.5C384.6,786.4 394.5,781.8 400.0,779.6C405.5,777.4 405.9,778.9 411.3,775.2C416.8,771.5 427.8,760.9 432.7,757.6C437.6,754.3 436.6,754.3 440.5,755.6C444.4,756.9 450.8,763.3 456.2,765.4C461.6,767.5 471.8,767.0 472.8,768.3C473.8,769.6 465.4,771.4 462.0,773.2C458.6,775.0 454.9,775.5 452.3,779.1C449.7,782.7 448.7,788.9 446.4,794.7C444.1,800.6 441.5,807.4 438.6,814.2C435.7,821.0 432.1,829.5 428.8,835.7C425.6,841.9 422.4,846.1 419.1,851.3C415.9,856.5 412.8,862.2 409.3,867.0C405.8,871.8 401.9,874.8 398.0,880.0C394.1,885.2 391.1,890.5 386.2,898.2C381.2,905.9 373.4,919.1 368.3,926.3C363.2,933.5 359.9,935.2 355.6,941.6C351.4,948.0 345.4,959.0 342.8,964.5C340.2,970.0 340.3,970.5 340.3,974.8C340.3,979.0 386.5,987.5 342.8,990.0C299.1,992.5 122.1,1010.7 78.0,990.0C33.9,969.3 77.0,886.8 78.0,866.0Z" fill="none" stroke="#474747" stroke-width="1.2" stroke-linejoin="round"/>
<polyline points="608.6,254.8 625.2,250 640.8,245.1 644.7,235.3 654.5,228.5" fill="none" stroke="#8a7a90" stroke-width="0.6"/>
<polygon points="729.6,340.9 734.9,335.6 743.7,335.6 743.7,340.9 736.7,342.6 731.4,342.6" fill="#E0F2FC" stroke="#505050" stroke-width="0.8"/>
<polygon points="717.4,397 724.4,393.5 733.2,390 743.7,391.8 740.2,395.3 727.9,397 720.9,402.3" fill="#E0F2FC" stroke="#505050" stroke-width="0.8"/>
<polygon points="756,411.1 763,407.5 777,405.8 785.8,407.5 784,411.1 770,411.1 759.5,416.3" fill="#E0F2FC" stroke="#505050" stroke-width="0.8"/>
</g>
<g stroke="#2e363c" stroke-width="1.05" fill="none"><line x1="276.5" y1="36" x2="276.5" y2="987"/><line x1="729.5" y1="36" x2="729.5" y2="987"/><line x1="83" y1="486.8" x2="1171" y2="486.8"/></g>
<g fill="#000">
<rect x="276.5" y="26" width="453" height="9.7"/><rect x="276.5" y="987.5" width="453" height="9"/>
<rect x="73.5" y="35.7" width="9.5" height="451.1"/><rect x="1171.5" y="35.7" width="9.5" height="451.1"/>
</g>
<g fill="none" stroke="#1a1a1a" stroke-width="1.6"><rect x="73.6" y="25.9" width="1107.3" height="970.8" rx="1.2"/></g>
<g stroke="#111" stroke-width="1.3"><line x1="73" y1="35.9" x2="1181.5" y2="35.9"/><line x1="73" y1="987.5" x2="1181.5" y2="987.5"/><line x1="83" y1="25" x2="83" y2="997"/><line x1="1171.5" y1="25" x2="1171.5" y2="997"/></g>
<g font-size="23.4" fill="#000">
<text x="245.4" y="16.6" textLength="64.5" lengthAdjust="spacingAndGlyphs">15°00'</text>
<text x="701.1" y="16.6" textLength="64.5" lengthAdjust="spacingAndGlyphs">16°30'</text>
<text x="244.8" y="1023" textLength="64.5" lengthAdjust="spacingAndGlyphs">15°00'</text>
<text x="700.8" y="1023" textLength="64.5" lengthAdjust="spacingAndGlyphs">16°30'</text>
<text x="-0.6" y="495.5" textLength="64.5" lengthAdjust="spacingAndGlyphs">39°00'</text>
<text x="1190" y="495.6" textLength="64.5" lengthAdjust="spacingAndGlyphs">39°00'</text>
</g>
<rect x="535.5" y="46.5" width="618" height="62" fill="#fff" stroke="#000" stroke-width="1"/>
<g font-size="12.2" fill="#000">
<text x="540.7" y="59.6">Terremoto del 20-01-2022 10:19:57 (ora locale) Mw=4.3 Prof=7 km</text>
<text x="540.7" y="74.6">Paura</text>
<text x="540.7" y="89.6">Dati non verificati estratti da 542 questionari compilati tramite Internet, relativi a comuni con almeno 3 questionari.</text>
<text x="540.7" y="105.3">Aggiornato il: 12-03-2026 11:59 (ora locale)</text>
</g>
<rect x="1051.5" y="171.5" width="101" height="333" fill="#fff" stroke="#000" stroke-width="1"/>
<g font-size="12.5" font-weight="bold" fill="#000" text-anchor="middle">
<text x="1102.4" y="184.1" textLength="86.7" lengthAdjust="spacingAndGlyphs">Percentuale</text>
<text x="1099.7" y="199.9" textLength="76.2" lengthAdjust="spacingAndGlyphs">di persone</text>
<text x="1101.8" y="215.7" textLength="74" lengthAdjust="spacingAndGlyphs">che hanno</text>
<text x="1102" y="231.5" textLength="55.7" lengthAdjust="spacingAndGlyphs">provato</text>
<text x="1099.9" y="247.3" textLength="41.6" lengthAdjust="spacingAndGlyphs">paura</text>
</g>
<rect x="1062.1" y="255.1" width="79.8" height="36.7" fill="#F8E0FC"/>
<text x="1102" y="277.8" font-size="12" font-weight="bold" fill="#000" text-anchor="middle" textLength="53.7" lengthAdjust="spacingAndGlyphs">0 - 24%</text>
<rect x="1062.1" y="299.1" width="79.8" height="36.5" fill="#E6CCFA"/>
<text x="1102" y="322" font-size="12" font-weight="bold" fill="#000" text-anchor="middle" textLength="61.7" lengthAdjust="spacingAndGlyphs">25 - 49%</text>
<rect x="1062.1" y="344.1" width="79.8" height="36.6" fill="#B76EF9"/>
<text x="1102" y="366.9" font-size="12" font-weight="bold" fill="#000" text-anchor="middle" textLength="61.7" lengthAdjust="spacingAndGlyphs">50 - 74%</text>
<rect x="1062.1" y="386" width="79.8" height="37.8" fill="#7F00FF"/>
<text x="1102" y="408.7" font-size="12" font-weight="bold" fill="#fff" text-anchor="middle" textLength="71.4" lengthAdjust="spacingAndGlyphs">75 - 100%</text>
<line x1="1052" y1="432.5" x2="1152" y2="432.5" stroke="#000" stroke-width="1" stroke-dasharray="2,2"/>
<g font-size="12.5" font-weight="bold" fill="#000" text-anchor="middle"><text x="1101.5" y="448.7" textLength="68.8" lengthAdjust="spacingAndGlyphs">Epicentro</text><text x="1101.4" y="464.8" textLength="88.8" lengthAdjust="spacingAndGlyphs">strumentale</text></g>
<polygon points="1100.00,477.30 1102.06,483.47 1108.56,483.52 1103.33,487.38 1105.29,493.58 1100.00,489.80 1094.71,493.58 1096.67,487.38 1091.44,483.52 1097.94,483.47" fill="#fff" stroke="#000" stroke-width="1.1"/>
<path d="M591.40,527.00 597.04,544.33 615.27,544.34 600.53,555.07 606.15,572.41 591.40,561.70 576.65,572.41 582.27,555.07 567.53,544.34 585.76,544.33Z M591.40,539.20 594.31,548.10 603.67,548.11 596.11,553.63 598.98,562.54 591.40,557.05 583.82,562.54 586.69,553.63 579.13,548.11 588.49,548.10Z" fill="#000" fill-rule="evenodd"/>
<g>
<rect x="159" y="930.8" width="175" height="5.8" fill="#fff" stroke="#000" stroke-width="1.1"/>
<rect x="159" y="930.3" width="34.7" height="6.8" fill="#000"/>
<rect x="228.5" y="930.3" width="34.7" height="6.8" fill="#000"/>
<rect x="298" y="930.3" width="36.0" height="6.8" fill="#000"/>
<line x1="159" y1="930" x2="159" y2="940.5" stroke="#000" stroke-width="1.1"/>
<line x1="193.7" y1="930" x2="193.7" y2="940.5" stroke="#000" stroke-width="1.1"/>
<line x1="228.5" y1="930" x2="228.5" y2="940.5" stroke="#000" stroke-width="1.1"/>
<line x1="263.2" y1="930" x2="263.2" y2="940.5" stroke="#000" stroke-width="1.1"/>
<line x1="298" y1="930" x2="298" y2="940.5" stroke="#000" stroke-width="1.1"/>
<line x1="334" y1="930" x2="334" y2="940.5" stroke="#000" stroke-width="1.1"/>
<text x="226" y="916" font-size="31.6" fill="#000" textLength="40" lengthAdjust="spacingAndGlyphs">km</text>
<text x="152.2" y="964.7" font-size="24.5" fill="#000">0</text>
<text x="319.6" y="964.7" font-size="24.5" fill="#000" textLength="26" lengthAdjust="spacingAndGlyphs">50</text>
</g>
<g transform="translate(95,40) scale(0.07326)">
<circle cx="505" cy="517" r="407" fill="url(#gb)"/>
<g clip-path="url(#gc2)">
<polygon points="545,290 640,130 720,160 770,210 560,285" fill="#1e9a46"/>
<polygon points="556,288 770,215 780,335 690,310 585,300" fill="#e30d25"/>
<polygon points="770,205 830,260 900,390 870,450 775,340" fill="#d4c2d8"/>
<polygon points="580,303 690,312 775,345 700,432 625,345" fill="#1f9a46"/>
<polygon points="548,298 625,345 700,432 685,452 548,468" fill="#eed81c"/>
<polygon points="700,432 775,345 875,455 850,530 770,605" fill="#eed81c"/>
<polygon points="875,395 915,440 915,510 870,460" fill="#1f9a46"/>
<polygon points="545,470 685,452 700,440 770,605 540,682" fill="#e30d25"/>
<polygon points="770,605 855,525 920,500 915,630 830,740 800,765" fill="#d4c2d8"/>
<polygon points="798,765 835,735 870,715 815,790" fill="#e30d25"/>
<polygon points="538,688 770,612 800,765 805,800 700,900 505,940 515,800" fill="#1f9a46"/>
</g>
<g fill="none" stroke="#fff" stroke-width="13" opacity="0.92">
<path d="M545,290 Q530,600 505,925"/><path d="M545,290 Q500,180 450,115"/><path d="M545,290 L640,140"/>
<path d="M545,290 Q720,460 800,780"/><path d="M545,290 Q330,520 240,800"/>
<path d="M450,118 Q340,170 330,260 Q330,420 540,465 Q700,455 880,380"/>
<path d="M105,500 Q200,360 545,292 Q680,260 770,215"/>
<path d="M110,610 Q300,660 540,682 Q760,650 912,500"/>
<path d="M240,800 Q400,880 510,872 Q700,850 805,780"/>
<path d="M190,240 Q170,420 260,560 Q380,700 540,682"/>
<path d="M558,288 L770,215"/>
</g></g>
<g fill="#3a3a3a" font-weight="bold" stroke="#e0f2fc" stroke-width="0.25"><text x="169.8" y="75.2" font-size="14" textLength="89.5" lengthAdjust="spacingAndGlyphs">ISTITUTO NAZIONALE</text>
<text x="169.8" y="89.4" font-size="14" textLength="136" lengthAdjust="spacingAndGlyphs">DI GEOFISICA E VULCANOLOGIA</text></g>
<g>
<circle cx="1094.5" cy="915.6" r="32.8" fill="#1a1a1a"/>
<circle cx="1094.5" cy="915.6" r="19.2" fill="none" stroke="#e3001b" stroke-width="5.4"/>
<circle cx="1094.5" cy="915.6" r="8.2" fill="#e3001b"/>
<polygon points="1098,914 1129.4,901.3 1130,933.4" fill="url(#tb)"/>
<circle cx="1143.8" cy="916.3" r="9.6" fill="#e3001b"/>
<text x="1143.8" y="921" font-size="12" font-weight="bold" fill="#fff" text-anchor="middle">?</text>
<text font-size="19" font-weight="bold" fill="#111"><textPath href="#ring" textLength="214" lengthAdjust="spacingAndGlyphs"><tspan fill="#e3001b">www.</tspan>haisentitoilterremoto<tspan fill="#e3001b">.it</tspan></textPath></text>
</g>
</svg></body></html>
